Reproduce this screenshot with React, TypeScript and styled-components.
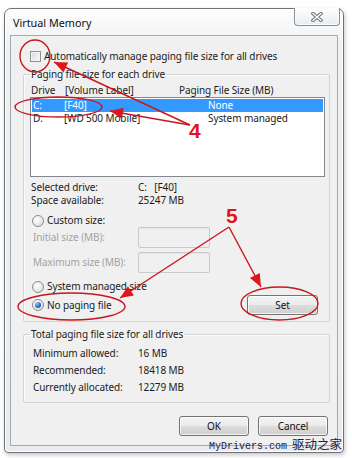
import React from 'react';
import styled, { createGlobalStyle, css } from 'styled-components';

const UI_FONT = `'Noto Sans', 'Open Sans', sans-serif`;
const RED = '#c9161d';

const GlobalStyle = createGlobalStyle`
  html, body {
    margin: 0;
    padding: 0;
    background: #ffffff;
  }
  body {
    font-family: ${UI_FONT};
    color: #1b1b1b;
  }
`;

const Page = styled.div`
  position: relative;
  width: 352px;
  height: 458px;
  box-sizing: border-box;
  padding: 8px 8px 5px 4px;
  display: flex;
  overflow: hidden;
`;

const Window = styled.div`
  flex: 1;
  display: flex;
  flex-direction: column;
  border: 1px solid #6e7277;
  border-radius: 7px 7px 4px 4px;
  background: linear-gradient(#fdfdfd 0%, #eef0f2 40px, #e9ebee 100%);
  box-shadow: 1px 2px 4px rgba(0, 0, 0, 0.22), inset 0 0 0 1px #ffffff;
  padding: 0 5px 6px 5px;
`;

const TitleBar = styled.div`
  height: 26px;
  display: flex;
  align-items: center;
`;

const Title = styled.div`
  margin-left: 3px;
  font-size: 10.8px;
  color: #111;
  flex: 1;
`;

const CloseButton = styled.div`
  align-self: flex-start;
  margin-top: -1px;
  margin-right: -2px;
  width: 46px;
  height: 18px;
  box-sizing: border-box;
  border: 1px solid #8b9096;
  border-top: none;
  border-radius: 0 0 4px 4px;
  background: linear-gradient(#ffffff, #e9ebee);
  box-shadow: inset 0 0 0 1px #fbfbfb;
  display: flex;
  align-items: center;
  justify-content: center;
`;

const Panel = styled.div`
  flex: 1;
  display: flex;
  flex-direction: column;
  background: #f0f0f0;
  border: 1px solid #a4a9ae;
  padding: 0 7px 9px 12px;
  font-size: 10px;
  letter-spacing: -0.1px;
  line-height: 13px;
`;

const CheckRow = styled.label`
  margin: 14px 0 0 7px;
  height: 12px;
  display: flex;
  align-items: center;
  gap: 3px;
`;

const CheckBox = styled.span`
  width: 11px;
  height: 11px;
  box-sizing: border-box;
  border: 1px solid #8e8f8f;
  background: linear-gradient(135deg, #d6d6d6, #f6f6f6 80%);
  box-shadow: inset 0 0 0 1px #f4f4f4;
  flex: none;
`;

const GroupBox = styled.fieldset<{ $top: number; $pad: number }>`
  margin: ${p => p.$top}px 0 0 0;
  padding: 0 4px ${p => p.$pad}px 6px;
  border: 1px solid #d2d4d6;
  border-radius: 2px;
  box-shadow: inset 1px 1px 0 #fafafa;
  display: flex;
  flex-direction: column;
  min-width: 0;
`;

const Legend = styled.legend`
  padding: 0 1px;
  line-height: 14px;
`;

const ListHeader = styled.div`
  margin-top: 3px;
  padding-left: 1px;
  display: grid;
  grid-template-columns: 34px 114px 1fr;
`;

const ListBox = styled.div`
  height: 80px;
  box-sizing: border-box;
  border: 1px solid #828790;
  background: #ffffff;
  padding: 1px 1px;
`;

const ListRow = styled.div<{ $selected?: boolean }>`
  height: 13px;
  padding-left: 1px;
  display: grid;
  grid-template-columns: 31px 144px 1fr;
  align-items: center;
  ${p =>
    p.$selected &&
    css`
      background: #3399ff;
      color: #ffffff;
    `}
`;

const InfoGrid = styled.div<{ $top: number; $line: number; $indent: number }>`
  margin-top: ${p => p.$top}px;
  padding-left: ${p => p.$indent}px;
  display: grid;
  grid-template-columns: ${p => 108 - p.$indent}px 1fr;
  grid-auto-rows: ${p => p.$line}px;
  align-items: center;
`;

const RadioRow = styled.div<{ $top: number }>`
  margin-top: ${p => p.$top}px;
  min-height: 13px;
  padding-left: 2px;
  display: flex;
  align-items: center;
  gap: 3px;
`;

const Radio = styled.span<{ $checked?: boolean }>`
  width: 12px;
  height: 12px;
  box-sizing: border-box;
  border-radius: 50%;
  border: 1px solid #8a8d92;
  background: radial-gradient(circle at 40% 35%, #ffffff 0%, #e9e9e9 55%, #d2d2d2 100%);
  flex: none;
  display: flex;
  align-items: center;
  justify-content: center;
  ${p =>
    p.$checked &&
    css`
      &::after {
        content: '';
        width: 6px;
        height: 6px;
        border-radius: 50%;
        background: radial-gradient(circle at 35% 30%, #9cc8f2 0%, #2a6cc4 55%, #16407e 100%);
      }
    `}
`;

const SizeRow = styled.div<{ $top: number }>`
  margin-top: ${p => p.$top}px;
  padding-left: 3px;
  display: grid;
  grid-template-columns: 105px 72px;
  align-items: center;
`;

const DimLabel = styled.span`
  color: #a3a3a3;
`;

const SizeInput = styled.div`
  height: 21px;
  box-sizing: border-box;
  border: 1px solid #c8cacc;
  border-radius: 2px;
  background: #f0f0f0;
  box-shadow: inset 0 1px 0 #e6e6e6;
`;

const Button = styled.button<{ $width: number }>`
  width: ${p => p.$width}px;
  height: 20px;
  margin: 0;
  padding: 0;
  box-sizing: border-box;
  border: 1px solid #747474;
  border-radius: 3px;
  background: linear-gradient(#f3f3f3 0%, #ebebeb 48%, #dcdcdc 52%, #cfcfcf 100%);
  box-shadow: inset 0 0 0 1px rgba(255, 255, 255, 0.75);
  font-family: ${UI_FONT};
  font-size: 10px;
  letter-spacing: -0.1px;
  color: #111;
`;

const PushRight = styled.div`
  margin-left: auto;
  margin-right: 7px;
`;

const ButtonBar = styled.div`
  margin-top: 13px;
  margin-right: 2px;
  display: flex;
  justify-content: flex-end;
  gap: 9px;
`;

const Overlay = styled.svg`
  position: absolute;
  left: 0;
  top: 0;
  pointer-events: none;
`;

const Callout = styled.span<{ $x: number; $y: number }>`
  position: absolute;
  left: ${p => p.$x}px;
  top: ${p => p.$y}px;
  font-family: 'Liberation Sans', Arial, sans-serif;
  font-weight: bold;
  font-size: 21px;
  line-height: 21px;
  color: #e3141b;
`;

const Watermark = styled.div`
  position: absolute;
  left: 209px;
  top: 434px;
  display: flex;
  align-items: baseline;
  gap: 5px;
  color: #1c1c3c;
  white-space: nowrap;
`;

const MonoMark = styled.span`
  font-family: 'Liberation Mono', 'DejaVu Sans Mono', monospace;
  font-size: 10px;
`;

const CjkMark = styled.span`
  font-family: 'Noto Sans CJK SC', sans-serif;
  font-size: 12.5px;
`;

type Pt = [number, number];

const arrows: { from: Pt; to: Pt }[] = [
  { from: [190, 125], to: [54, 62] },
  { from: [190, 125], to: [110, 111] },
  { from: [229, 227], to: [120, 298] },
  { from: [229, 227], to: [261, 287] },
];

const ellipses = [
  { cx: 35, cy: 56, rx: 15, ry: 16 },
  { cx: 58.5, cy: 107, rx: 43.5, ry: 10 },
  { cx: 71.5, cy: 306.5, rx: 53.5, ry: 13.5 },
  { cx: 279.5, cy: 303.5, rx: 38.5, ry: 16.5 },
];

function headPoints(from: Pt, to: Pt, len = 13, half = 5.5) {
  const dx = to[0] - from[0];
  const dy = to[1] - from[1];
  const d = Math.hypot(dx, dy);
  const ux = dx / d;
  const uy = dy / d;
  const bx = to[0] - ux * len;
  const by = to[1] - uy * len;
  return [
    `${to[0]},${to[1]}`,
    `${bx - uy * half},${by + ux * half}`,
    `${bx + uy * half},${by - ux * half}`,
  ].join(' ');
}

function Annotations() {
  return (
    <Overlay width={352} height={458} viewBox="0 0 352 458">
      {ellipses.map((e, i) => (
        <ellipse key={i} {...e} fill="none" stroke={RED} strokeWidth={1.4} />
      ))}
      {arrows.map((a, i) => (
        <g key={i}>
          <line x1={a.from[0]} y1={a.from[1]} x2={a.to[0]} y2={a.to[1]} stroke={RED} strokeWidth={1.4} />
          <polygon points={headPoints(a.from, a.to)} fill="#e0141b" />
        </g>
      ))}
    </Overlay>
  );
}

export default function App() {
  return (
    <>
      <GlobalStyle />
      <Page>
        <Window>
          <TitleBar>
            <Title>Virtual Memory</Title>
            <CloseButton>
              <svg width="12" height="10" viewBox="0 0 12 10">
                <path d="M2 1.5 L10 8.5 M10 1.5 L2 8.5" stroke="#6c7176" strokeWidth="3.4" strokeLinecap="square" />
                <path d="M2 1.5 L10 8.5 M10 1.5 L2 8.5" stroke="#ffffff" strokeWidth="1.4" strokeLinecap="square" />
              </svg>
            </CloseButton>
          </TitleBar>

          <Panel>
            <CheckRow>
              <CheckBox />
              Automatically manage paging file size for all drives
            </CheckRow>

            <GroupBox $top={5} $pad={6}>
              <Legend>Paging file size for each drive</Legend>
              <ListHeader>
                <span>Drive</span>
                <span>[Volume Label]</span>
                <span>Paging File Size (MB)</span>
              </ListHeader>
              <ListBox>
                <ListRow $selected>
                  <span>C:</span>
                  <span>[F40]</span>
                  <span>None</span>
                </ListRow>
                <ListRow>
                  <span>D:</span>
                  <span>[WD 500 Mobile]</span>
                  <span>System managed</span>
                </ListRow>
              </ListBox>

              <InfoGrid $top={4} $line={13} $indent={1}>
                <span>Selected drive:</span>
                <span>C:&nbsp;&nbsp;&nbsp;[F40]</span>
                <span>Space available:</span>
                <span>25247 MB</span>
              </InfoGrid>

              <RadioRow $top={7}>
                <Radio />
                Custom size:
              </RadioRow>
              <SizeRow $top={0}>
                <DimLabel>Initial size (MB):</DimLabel>
                <SizeInput />
              </SizeRow>
              <SizeRow $top={4}>
                <DimLabel>Maximum size (MB):</DimLabel>
                <SizeInput />
              </SizeRow>

              <RadioRow $top={7}>
                <Radio />
                System managed size
              </RadioRow>
              <RadioRow $top={2}>
                <Radio $checked />
                No paging file
                <PushRight>
                  <Button $width={71}>Set</Button>
                </PushRight>
              </RadioRow>
            </GroupBox>

            <GroupBox $top={5} $pad={6}>
              <Legend>Total paging file size for all drives</Legend>
              <InfoGrid $top={4} $line={17} $indent={3}>
                <span>Minimum allowed:</span>
                <span>16 MB</span>
                <span>Recommended:</span>
                <span>18418 MB</span>
                <span>Currently allocated:</span>
                <span>12279 MB</span>
              </InfoGrid>
            </GroupBox>

            <ButtonBar>
              <Button $width={70}>OK</Button>
              <Button $width={70}>Cancel</Button>
            </ButtonBar>
          </Panel>
        </Window>

        <Annotations />
        <Callout $x={189} $y={120}>4</Callout>
        <Callout $x={226} $y={205}>5</Callout>

        <Watermark>
          <MonoMark>MyDrivers.com</MonoMark>
          <CjkMark>驱动之家</CjkMark>
        </Watermark>
      </Page>
    </>
  );
}
